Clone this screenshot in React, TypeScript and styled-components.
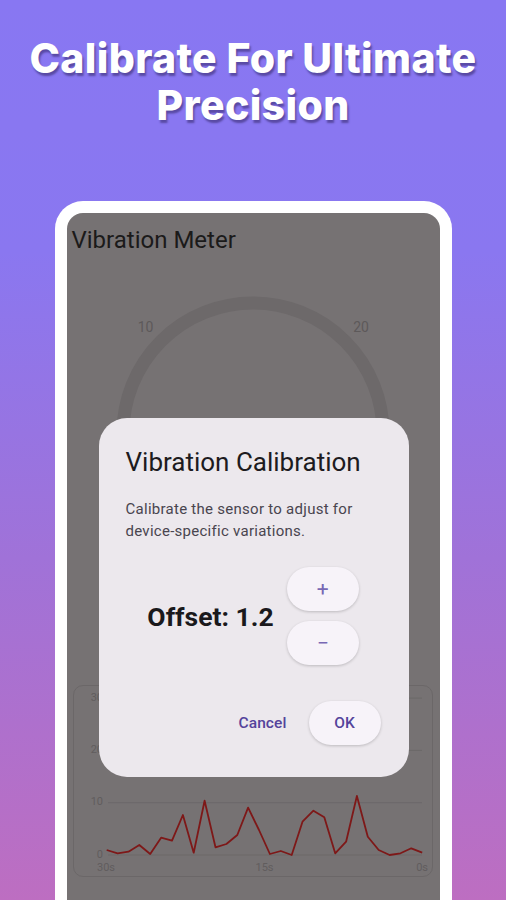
import React from 'react';
import styled, { createGlobalStyle } from 'styled-components';

const GlobalStyle = createGlobalStyle`
  html, body {
    margin: 0;
    padding: 0;
  }
  body {
    width: 506px;
    height: 900px;
    overflow: hidden;
    font-family: Roboto, 'Noto Sans', sans-serif;
  }
`;

const Page = styled.div`
  width: 506px;
  height: 900px;
  overflow: hidden;
  display: flex;
  flex-direction: column;
  align-items: center;
  background: linear-gradient(180deg, #8877f2 0%, #8a77f0 28%, #a072d8 62%, #bd6ec1 100%);
`;

const Headline = styled.h1`
  margin: 0;
  padding-top: 35px;
  font-family: Inter, 'Liberation Sans', sans-serif;
  font-weight: 800;
  font-size: 41px;
  line-height: 47px;
  letter-spacing: 0.35px;
  color: #ffffff;
  text-align: center;
  text-shadow: 1.5px 2.5px 2px rgba(30, 20, 70, 0.45);
`;

const PhoneFrame = styled.div`
  margin-top: 72px;
  width: 397px;
  flex: 1;
  box-sizing: border-box;
  padding: 12px 12px 0;
  background: #ffffff;
  border-radius: 28px 28px 0 0;
  display: flex;
`;

const Screen = styled.div`
  position: relative;
  flex: 1;
  border-radius: 16px 16px 0 0;
  overflow: hidden;
  background: #767273;
  display: flex;
  flex-direction: column;
`;

const AppTitle = styled.div`
  padding: 13px 0 0 5px;
  font-size: 24px;
  line-height: 28px;
  color: #1b1a1a;
`;

const GaugeArea = styled.svg`
  display: block;
  width: 373px;
  height: 431px;
  flex-shrink: 0;
`;

const ChartCard = styled.div`
  margin: 0 7px 0 6px;
  height: 192px;
  box-sizing: border-box;
  border: 1px solid #6b6768;
  border-radius: 10px;
  flex-shrink: 0;
`;

const ChartSvg = styled.svg`
  display: block;
  width: 358px;
  height: 190px;
`;

const Dialog = styled.div`
  position: absolute;
  left: 32px;
  top: 205px;
  width: 310px;
  box-sizing: border-box;
  padding: 28px 28px 32px 27px;
  background: #ece8ed;
  border-radius: 28px;
  display: flex;
  flex-direction: column;
`;

const DialogTitle = styled.div`
  font-size: 26px;
  line-height: 32px;
  color: #1d1b20;
`;

const DialogBody = styled.div`
  margin-top: 20px;
  font-size: 15px;
  line-height: 22px;
  letter-spacing: 0.27px;
  color: #49454f;
`;

const OffsetRow = styled.div`
  margin-top: 25px;
  display: flex;
  align-items: center;
  justify-content: center;
  gap: 13px;
`;

const OffsetLabel = styled.div`
  font-size: 26.5px;
  font-weight: 700;
  color: #1a191c;
`;

const Stepper = styled.div`
  display: flex;
  flex-direction: column;
  gap: 10px;
`;

const PillButton = styled.button<{ $filled?: boolean }>`
  width: 72px;
  height: 44px;
  padding: 0;
  border: none;
  border-radius: 22px;
  font-family: Roboto, 'Noto Sans', sans-serif;
  background: ${(p) => (p.$filled ? '#f7f3f9' : 'transparent')};
  box-shadow: ${(p) => (p.$filled ? '0 1px 3px rgba(0, 0, 0, 0.2)' : 'none')};
  display: flex;
  align-items: center;
  justify-content: center;
`;

const StepGlyph = styled.span`
  font-size: 21px;
  line-height: 1;
  color: #7868b4;
`;

const ActionText = styled.span`
  font-size: 15.5px;
  font-weight: 500;
  letter-spacing: 0.1px;
  color: #54439b;
`;

const Actions = styled.div`
  margin-top: 36px;
  display: flex;
  justify-content: flex-end;
  gap: 10px;
`;

const readings = [
  0.96, 0.33, 0.63, 1.91, 0.19, 3.31, 2.73, 7.65, 0.44, 10.38, 1.47, 2.1, 3.82, 9.04, 4.78, 0.19, 0.76, 0, 6.37,
  8.47, 7.21, 0.33, 2.54, 11.28, 3.5, 0.96, 0, 0.33, 1.28, 0.44,
];

const gridLevels = [30, 20, 10, 0];
const yFor = (v: number) => 169 - v * 5.23;

const App: React.FC = () => {
  const points = readings.map((v, i) => `${(32.7 + i * 10.88).toFixed(1)},${yFor(v).toFixed(1)}`).join(' ');

  return (
    <Page>
      <GlobalStyle />
      <Headline>
        Calibrate For Ultimate
        <br />
        Precision
      </Headline>
      <PhoneFrame>
        <Screen>
          <AppTitle>Vibration Meter</AppTitle>
          <GaugeArea viewBox="0 0 373 431">
            <path d="M 56 179 A 130 130 0 0 1 316 179" fill="none" stroke="#6d696a" strokeWidth={13} />
            <text x={78.5} y={73} fill="#5d595a" fontSize={14} textAnchor="middle" dominantBaseline="central" fontFamily="Roboto, sans-serif">
              10
            </text>
            <text x={294} y={73} fill="#5d595a" fontSize={14} textAnchor="middle" dominantBaseline="central" fontFamily="Roboto, sans-serif">
              20
            </text>
          </GaugeArea>
          <ChartCard>
            <ChartSvg viewBox="0 0 358 190">
              {gridLevels.map((lvl) => (
                <g key={lvl}>
                  <line x1={34} x2={348} y1={yFor(lvl)} y2={yFor(lvl)} stroke="#6c6869" strokeWidth={1} />
                  <text x={29} y={yFor(lvl) - 1} fill="#615d5e" fontSize={11} textAnchor="end" dominantBaseline="central" fontFamily="Roboto, sans-serif">
                    {lvl}
                  </text>
                </g>
              ))}
              <polyline points={points} fill="none" stroke="#7e1818" strokeWidth={1.8} strokeLinejoin="round" />
              <text x={23} y={181.5} fill="#615d5e" fontSize={11} dominantBaseline="central" fontFamily="Roboto, sans-serif">
                30s
              </text>
              <text x={190.5} y={181.5} fill="#615d5e" fontSize={11} textAnchor="middle" dominantBaseline="central" fontFamily="Roboto, sans-serif">
                15s
              </text>
              <text x={354} y={181.5} fill="#615d5e" fontSize={11} textAnchor="end" dominantBaseline="central" fontFamily="Roboto, sans-serif">
                0s
              </text>
            </ChartSvg>
          </ChartCard>

          <Dialog>
            <DialogTitle>Vibration Calibration</DialogTitle>
            <DialogBody>
              Calibrate the sensor to adjust for
              <br />
              device-specific variations.
            </DialogBody>
            <OffsetRow>
              <OffsetLabel>Offset: 1.2</OffsetLabel>
              <Stepper>
                <PillButton $filled>
                  <StepGlyph>+</StepGlyph>
                </PillButton>
                <PillButton $filled>
                  <StepGlyph>−</StepGlyph>
                </PillButton>
              </Stepper>
            </OffsetRow>
            <Actions>
              <PillButton>
                <ActionText>Cancel</ActionText>
              </PillButton>
              <PillButton $filled>
                <ActionText>OK</ActionText>
              </PillButton>
            </Actions>
          </Dialog>
        </Screen>
      </PhoneFrame>
    </Page>
  );
};

export default App;
